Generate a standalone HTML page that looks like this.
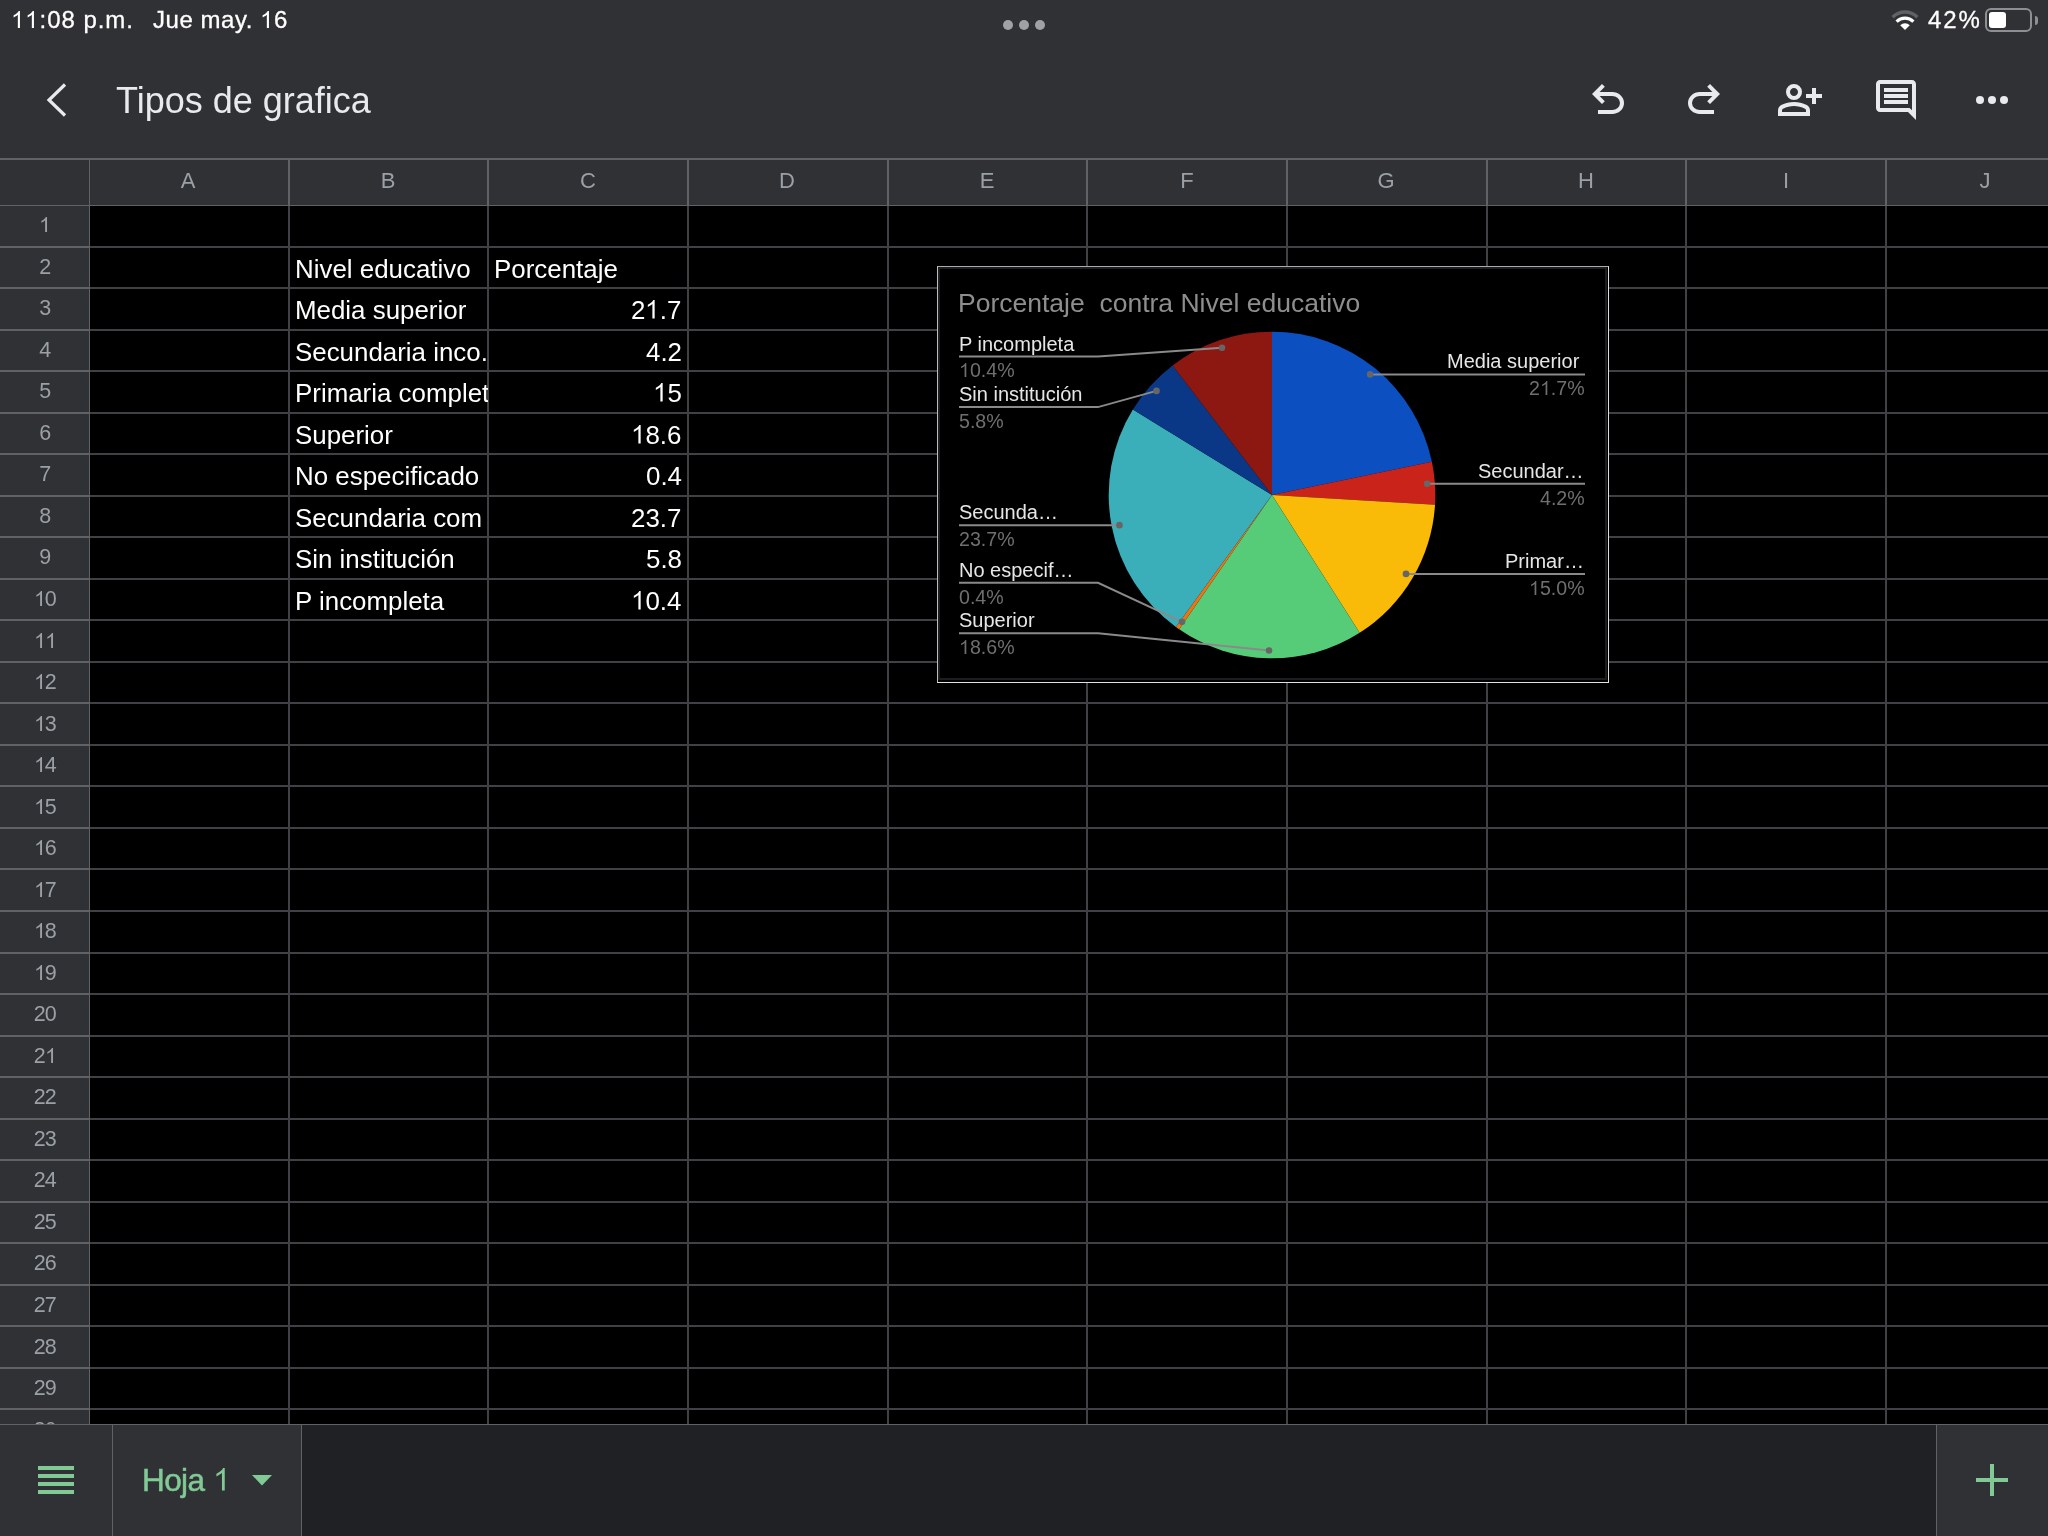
<!DOCTYPE html>
<html><head><meta charset="utf-8"><style>
html,body{margin:0;padding:0;width:2048px;height:1536px;overflow:hidden;background:#000;}
body{position:relative;font-family:"Liberation Sans",sans-serif;}
.t{position:absolute;line-height:1;white-space:pre;will-change:transform;}
.a{position:absolute;}
</style></head><body>
<div class="a" style="left:0;top:0;width:2048px;height:158px;background:#303134"></div>
<div class="t" style="left:10.8px;top:8.28px;font-size:24px;color:#ffffff;letter-spacing:0.95px;-webkit-text-stroke:0.3px #fff;"><svg viewBox="0 -716 556 716" style="width:0.556em;height:0.716em;vertical-align:baseline;margin-right:0.95px;"><path d="M373 0H285V-560L240 -522 175 -485 109 -449V-534L190 -578 255 -630 300 -680 320 -716H373Z" fill="currentColor"/></svg><svg viewBox="0 -716 556 716" style="width:0.556em;height:0.716em;vertical-align:baseline;margin-right:0.95px;"><path d="M373 0H285V-560L240 -522 175 -485 109 -449V-534L190 -578 255 -630 300 -680 320 -716H373Z" fill="currentColor"/></svg>:08 p.m.</div>
<div class="t" style="left:152.5px;top:8.28px;font-size:24px;color:#ffffff;letter-spacing:0.55px;-webkit-text-stroke:0.3px #fff;">Jue may. <svg viewBox="0 -716 556 716" style="width:0.556em;height:0.716em;vertical-align:baseline;margin-right:0.55px;"><path d="M373 0H285V-560L240 -522 175 -485 109 -449V-534L190 -578 255 -630 300 -680 320 -716H373Z" fill="currentColor"/></svg>6</div>
<div class="t" style="left:1928px;top:8.28px;font-size:24px;color:#ffffff;letter-spacing:1.9px;-webkit-text-stroke:0.3px #fff;">42%</div>
<div class="a" style="left:1003px;top:20px;width:10px;height:10px;border-radius:5px;background:#a0a1a5"></div>
<div class="a" style="left:1019px;top:20px;width:10px;height:10px;border-radius:5px;background:#a0a1a5"></div>
<div class="a" style="left:1035px;top:20px;width:10px;height:10px;border-radius:5px;background:#a0a1a5"></div>
<svg class="a" style="left:1889px;top:8px" width="32" height="24" viewBox="0 0 32 24">
<path d="M16 22 L11.2 17.2 A7 7 0 0 1 20.8 17.2 Z" fill="#fff"/>
<path d="M7.6 13.6 A12 12 0 0 1 24.4 13.6" stroke="#fff" stroke-width="3.2" fill="none"/>
<path d="M3.6 9.2 A17.5 17.5 0 0 1 28.4 9.2" stroke="#606164" stroke-width="3.4" fill="none"/>
</svg>
<div class="a" style="left:1985.2px;top:8.3px;width:43.3px;height:19.4px;border:2px solid #8e8f92;border-radius:6px;"></div>
<div class="a" style="left:1988.9px;top:11.9px;width:17px;height:16.1px;background:#fff;border-radius:3px;"></div>
<div class="a" style="left:2034.8px;top:16px;width:3.2px;height:8.8px;background:#8e8f92;border-radius:0 4px 4px 0;"></div>
<svg class="a" style="left:40px;top:80px" width="32" height="40" viewBox="0 0 32 40"><path d="M25 4.5 L9 20 L25 35.5" stroke="#e8eaed" stroke-width="3.2" fill="none" stroke-linecap="butt"/></svg>
<div class="t" style="left:116px;top:82.53px;font-size:36px;color:#e8eaed;">Tipos de grafica</div>
<svg class="a" style="left:1584px;top:76px" width="48" height="48" viewBox="0 -960 960 960"><path d="M280-200v-80h284q63 0 109.5-40T720-420q0-60-46.5-100T564-560H312l104 104-56 56-200-200 200-200 56 56-104 104h252q97 0 166.5 63T800-420q0 94-69.5 157T564-200H280Z" fill="#e8eaed"/></svg>
<svg class="a" style="left:1680px;top:76px" width="48" height="48" viewBox="0 -960 960 960"><path d="M396-200q-97 0-166.5-63T160-420q0-94 69.5-157T396-640h252L544-744l56-56 200 200-200 200-56-56 104-104H396q-63 0-109.5 40T240-420q0 60 46.5 100T396-280h284v80H396Z" fill="#e8eaed"/></svg>
<svg class="a" style="left:1776px;top:76px" width="48" height="48" viewBox="0 -960 960 960"><path d="M720-400v-120H600v-80h120v-120h80v120h120v80H800v120h-80Zm-360-80q-66 0-113-47t-47-113q0-66 47-113t113-47q66 0 113 47t47 113q0 66-47 113t-113 47ZM40-160v-112q0-34 17.5-62.5T104-378q62-31 126-46.5T360-440q66 0 130 15.5T616-378q29 15 46.5 43.5T680-272v112H40Zm80-80h480v-32q0-11-5.5-20T580-306q-54-27-109-40.5T360-360q-56 0-111 13.5T140-306q-9 5-14.5 14t-5.5 20v32Zm240-320q33 0 56.5-23.5T440-640q0-33-23.5-56.5T360-720q-33 0-56.5 23.5T280-640q0 33 23.5 56.5T360-560Z" fill="#e8eaed"/></svg>
<svg class="a" style="left:1872px;top:76px" width="48" height="48" viewBox="0 0 24 24"><path d="M21.99 4c0-1.1-.89-2-1.99-2H4c-1.1 0-2 .9-2 2v12c0 1.1.9 2 2 2h14l4 4-.01-18zM20 4v13.17L18.83 16H4V4h16zM6 12h12v2H6zm0-3h12v2H6zm0-3h12v2H6z" fill="#e8eaed"/></svg>
<div class="a" style="left:1976px;top:96px;width:8px;height:8px;border-radius:4px;background:#e8eaed"></div>
<div class="a" style="left:1988px;top:96px;width:8px;height:8px;border-radius:4px;background:#e8eaed"></div>
<div class="a" style="left:2000px;top:96px;width:8px;height:8px;border-radius:4px;background:#e8eaed"></div>
<div class="a" style="left:0;top:158px;width:2048px;height:2px;background:#5f6368"></div>
<div class="a" style="left:0;top:160px;width:2048px;height:45px;background:#303134"></div>
<div class="a" style="left:0;top:205px;width:89px;height:1219px;background:#303134"></div>
<div class="t" style="left:-311.665px;width:1000px;text-align:center;top:169.78px;font-size:22px;color:#9aa0a6;">A</div>
<div class="t" style="left:-111.99500000000006px;width:1000px;text-align:center;top:169.78px;font-size:22px;color:#9aa0a6;">B</div>
<div class="t" style="left:87.67499999999995px;width:1000px;text-align:center;top:169.78px;font-size:22px;color:#9aa0a6;">C</div>
<div class="t" style="left:287.345px;width:1000px;text-align:center;top:169.78px;font-size:22px;color:#9aa0a6;">D</div>
<div class="t" style="left:487.015px;width:1000px;text-align:center;top:169.78px;font-size:22px;color:#9aa0a6;">E</div>
<div class="t" style="left:686.685px;width:1000px;text-align:center;top:169.78px;font-size:22px;color:#9aa0a6;">F</div>
<div class="t" style="left:886.355px;width:1000px;text-align:center;top:169.78px;font-size:22px;color:#9aa0a6;">G</div>
<div class="t" style="left:1086.0249999999999px;width:1000px;text-align:center;top:169.78px;font-size:22px;color:#9aa0a6;">H</div>
<div class="t" style="left:1285.695px;width:1000px;text-align:center;top:169.78px;font-size:22px;color:#9aa0a6;">I</div>
<div class="t" style="left:1485.365px;width:1000px;text-align:center;top:169.78px;font-size:22px;color:#9aa0a6;">J</div>
<div class="t" style="left:-456px;width:1000px;text-align:center;top:215.20px;font-size:21.5px;color:#9aa0a6;letter-spacing:-0.8px;padding-left:0.8px;"><svg viewBox="0 -716 556 716" style="width:0.556em;height:0.716em;vertical-align:baseline;margin-right:-0.8px;"><path d="M373 0H285V-560L240 -522 175 -485 109 -449V-534L190 -578 255 -630 300 -680 320 -716H373Z" fill="currentColor"/></svg></div>
<div class="t" style="left:-456px;width:1000px;text-align:center;top:256.73px;font-size:21.5px;color:#9aa0a6;letter-spacing:-0.8px;padding-left:0.8px;">2</div>
<div class="t" style="left:-456px;width:1000px;text-align:center;top:298.26px;font-size:21.5px;color:#9aa0a6;letter-spacing:-0.8px;padding-left:0.8px;">3</div>
<div class="t" style="left:-456px;width:1000px;text-align:center;top:339.79px;font-size:21.5px;color:#9aa0a6;letter-spacing:-0.8px;padding-left:0.8px;">4</div>
<div class="t" style="left:-456px;width:1000px;text-align:center;top:381.32px;font-size:21.5px;color:#9aa0a6;letter-spacing:-0.8px;padding-left:0.8px;">5</div>
<div class="t" style="left:-456px;width:1000px;text-align:center;top:422.85px;font-size:21.5px;color:#9aa0a6;letter-spacing:-0.8px;padding-left:0.8px;">6</div>
<div class="t" style="left:-456px;width:1000px;text-align:center;top:464.38px;font-size:21.5px;color:#9aa0a6;letter-spacing:-0.8px;padding-left:0.8px;">7</div>
<div class="t" style="left:-456px;width:1000px;text-align:center;top:505.91px;font-size:21.5px;color:#9aa0a6;letter-spacing:-0.8px;padding-left:0.8px;">8</div>
<div class="t" style="left:-456px;width:1000px;text-align:center;top:547.44px;font-size:21.5px;color:#9aa0a6;letter-spacing:-0.8px;padding-left:0.8px;">9</div>
<div class="t" style="left:-456px;width:1000px;text-align:center;top:588.97px;font-size:21.5px;color:#9aa0a6;letter-spacing:-0.8px;padding-left:0.8px;"><svg viewBox="0 -716 556 716" style="width:0.556em;height:0.716em;vertical-align:baseline;margin-right:-0.8px;"><path d="M373 0H285V-560L240 -522 175 -485 109 -449V-534L190 -578 255 -630 300 -680 320 -716H373Z" fill="currentColor"/></svg>0</div>
<div class="t" style="left:-456px;width:1000px;text-align:center;top:630.50px;font-size:21.5px;color:#9aa0a6;letter-spacing:-0.8px;padding-left:0.8px;"><svg viewBox="0 -716 556 716" style="width:0.556em;height:0.716em;vertical-align:baseline;margin-right:-0.8px;"><path d="M373 0H285V-560L240 -522 175 -485 109 -449V-534L190 -578 255 -630 300 -680 320 -716H373Z" fill="currentColor"/></svg><svg viewBox="0 -716 556 716" style="width:0.556em;height:0.716em;vertical-align:baseline;margin-right:-0.8px;"><path d="M373 0H285V-560L240 -522 175 -485 109 -449V-534L190 -578 255 -630 300 -680 320 -716H373Z" fill="currentColor"/></svg></div>
<div class="t" style="left:-456px;width:1000px;text-align:center;top:672.03px;font-size:21.5px;color:#9aa0a6;letter-spacing:-0.8px;padding-left:0.8px;"><svg viewBox="0 -716 556 716" style="width:0.556em;height:0.716em;vertical-align:baseline;margin-right:-0.8px;"><path d="M373 0H285V-560L240 -522 175 -485 109 -449V-534L190 -578 255 -630 300 -680 320 -716H373Z" fill="currentColor"/></svg>2</div>
<div class="t" style="left:-456px;width:1000px;text-align:center;top:713.56px;font-size:21.5px;color:#9aa0a6;letter-spacing:-0.8px;padding-left:0.8px;"><svg viewBox="0 -716 556 716" style="width:0.556em;height:0.716em;vertical-align:baseline;margin-right:-0.8px;"><path d="M373 0H285V-560L240 -522 175 -485 109 -449V-534L190 -578 255 -630 300 -680 320 -716H373Z" fill="currentColor"/></svg>3</div>
<div class="t" style="left:-456px;width:1000px;text-align:center;top:755.09px;font-size:21.5px;color:#9aa0a6;letter-spacing:-0.8px;padding-left:0.8px;"><svg viewBox="0 -716 556 716" style="width:0.556em;height:0.716em;vertical-align:baseline;margin-right:-0.8px;"><path d="M373 0H285V-560L240 -522 175 -485 109 -449V-534L190 -578 255 -630 300 -680 320 -716H373Z" fill="currentColor"/></svg>4</div>
<div class="t" style="left:-456px;width:1000px;text-align:center;top:796.62px;font-size:21.5px;color:#9aa0a6;letter-spacing:-0.8px;padding-left:0.8px;"><svg viewBox="0 -716 556 716" style="width:0.556em;height:0.716em;vertical-align:baseline;margin-right:-0.8px;"><path d="M373 0H285V-560L240 -522 175 -485 109 -449V-534L190 -578 255 -630 300 -680 320 -716H373Z" fill="currentColor"/></svg>5</div>
<div class="t" style="left:-456px;width:1000px;text-align:center;top:838.15px;font-size:21.5px;color:#9aa0a6;letter-spacing:-0.8px;padding-left:0.8px;"><svg viewBox="0 -716 556 716" style="width:0.556em;height:0.716em;vertical-align:baseline;margin-right:-0.8px;"><path d="M373 0H285V-560L240 -522 175 -485 109 -449V-534L190 -578 255 -630 300 -680 320 -716H373Z" fill="currentColor"/></svg>6</div>
<div class="t" style="left:-456px;width:1000px;text-align:center;top:879.68px;font-size:21.5px;color:#9aa0a6;letter-spacing:-0.8px;padding-left:0.8px;"><svg viewBox="0 -716 556 716" style="width:0.556em;height:0.716em;vertical-align:baseline;margin-right:-0.8px;"><path d="M373 0H285V-560L240 -522 175 -485 109 -449V-534L190 -578 255 -630 300 -680 320 -716H373Z" fill="currentColor"/></svg>7</div>
<div class="t" style="left:-456px;width:1000px;text-align:center;top:921.21px;font-size:21.5px;color:#9aa0a6;letter-spacing:-0.8px;padding-left:0.8px;"><svg viewBox="0 -716 556 716" style="width:0.556em;height:0.716em;vertical-align:baseline;margin-right:-0.8px;"><path d="M373 0H285V-560L240 -522 175 -485 109 -449V-534L190 -578 255 -630 300 -680 320 -716H373Z" fill="currentColor"/></svg>8</div>
<div class="t" style="left:-456px;width:1000px;text-align:center;top:962.74px;font-size:21.5px;color:#9aa0a6;letter-spacing:-0.8px;padding-left:0.8px;"><svg viewBox="0 -716 556 716" style="width:0.556em;height:0.716em;vertical-align:baseline;margin-right:-0.8px;"><path d="M373 0H285V-560L240 -522 175 -485 109 -449V-534L190 -578 255 -630 300 -680 320 -716H373Z" fill="currentColor"/></svg>9</div>
<div class="t" style="left:-456px;width:1000px;text-align:center;top:1004.27px;font-size:21.5px;color:#9aa0a6;letter-spacing:-0.8px;padding-left:0.8px;">20</div>
<div class="t" style="left:-456px;width:1000px;text-align:center;top:1045.80px;font-size:21.5px;color:#9aa0a6;letter-spacing:-0.8px;padding-left:0.8px;">2<svg viewBox="0 -716 556 716" style="width:0.556em;height:0.716em;vertical-align:baseline;margin-right:-0.8px;"><path d="M373 0H285V-560L240 -522 175 -485 109 -449V-534L190 -578 255 -630 300 -680 320 -716H373Z" fill="currentColor"/></svg></div>
<div class="t" style="left:-456px;width:1000px;text-align:center;top:1087.33px;font-size:21.5px;color:#9aa0a6;letter-spacing:-0.8px;padding-left:0.8px;">22</div>
<div class="t" style="left:-456px;width:1000px;text-align:center;top:1128.86px;font-size:21.5px;color:#9aa0a6;letter-spacing:-0.8px;padding-left:0.8px;">23</div>
<div class="t" style="left:-456px;width:1000px;text-align:center;top:1170.39px;font-size:21.5px;color:#9aa0a6;letter-spacing:-0.8px;padding-left:0.8px;">24</div>
<div class="t" style="left:-456px;width:1000px;text-align:center;top:1211.92px;font-size:21.5px;color:#9aa0a6;letter-spacing:-0.8px;padding-left:0.8px;">25</div>
<div class="t" style="left:-456px;width:1000px;text-align:center;top:1253.45px;font-size:21.5px;color:#9aa0a6;letter-spacing:-0.8px;padding-left:0.8px;">26</div>
<div class="t" style="left:-456px;width:1000px;text-align:center;top:1294.98px;font-size:21.5px;color:#9aa0a6;letter-spacing:-0.8px;padding-left:0.8px;">27</div>
<div class="t" style="left:-456px;width:1000px;text-align:center;top:1336.51px;font-size:21.5px;color:#9aa0a6;letter-spacing:-0.8px;padding-left:0.8px;">28</div>
<div class="t" style="left:-456px;width:1000px;text-align:center;top:1378.04px;font-size:21.5px;color:#9aa0a6;letter-spacing:-0.8px;padding-left:0.8px;">29</div>
<div class="t" style="left:-456px;width:1000px;text-align:center;top:1419.57px;font-size:21.5px;color:#9aa0a6;letter-spacing:-0.8px;padding-left:0.8px;">30</div>
<div class="a" style="left:0;top:205px;width:2048px;height:1px;background:#5f6368"></div>
<div class="a" style="left:0;top:246px;width:89px;height:2px;background:#5f6368"></div>
<div class="a" style="left:90px;top:246px;width:1958px;height:2px;background:#404145"></div>
<div class="a" style="left:0;top:287px;width:89px;height:2px;background:#5f6368"></div>
<div class="a" style="left:90px;top:287px;width:1958px;height:2px;background:#404145"></div>
<div class="a" style="left:0;top:329px;width:89px;height:2px;background:#5f6368"></div>
<div class="a" style="left:90px;top:329px;width:1958px;height:2px;background:#404145"></div>
<div class="a" style="left:0;top:370px;width:89px;height:2px;background:#5f6368"></div>
<div class="a" style="left:90px;top:370px;width:1958px;height:2px;background:#404145"></div>
<div class="a" style="left:0;top:412px;width:89px;height:2px;background:#5f6368"></div>
<div class="a" style="left:90px;top:412px;width:1958px;height:2px;background:#404145"></div>
<div class="a" style="left:0;top:453px;width:89px;height:2px;background:#5f6368"></div>
<div class="a" style="left:90px;top:453px;width:1958px;height:2px;background:#404145"></div>
<div class="a" style="left:0;top:495px;width:89px;height:2px;background:#5f6368"></div>
<div class="a" style="left:90px;top:495px;width:1958px;height:2px;background:#404145"></div>
<div class="a" style="left:0;top:536px;width:89px;height:2px;background:#5f6368"></div>
<div class="a" style="left:90px;top:536px;width:1958px;height:2px;background:#404145"></div>
<div class="a" style="left:0;top:578px;width:89px;height:2px;background:#5f6368"></div>
<div class="a" style="left:90px;top:578px;width:1958px;height:2px;background:#404145"></div>
<div class="a" style="left:0;top:619px;width:89px;height:2px;background:#5f6368"></div>
<div class="a" style="left:90px;top:619px;width:1958px;height:2px;background:#404145"></div>
<div class="a" style="left:0;top:661px;width:89px;height:2px;background:#5f6368"></div>
<div class="a" style="left:90px;top:661px;width:1958px;height:2px;background:#404145"></div>
<div class="a" style="left:0;top:702px;width:89px;height:2px;background:#5f6368"></div>
<div class="a" style="left:90px;top:702px;width:1958px;height:2px;background:#404145"></div>
<div class="a" style="left:0;top:744px;width:89px;height:2px;background:#5f6368"></div>
<div class="a" style="left:90px;top:744px;width:1958px;height:2px;background:#404145"></div>
<div class="a" style="left:0;top:785px;width:89px;height:2px;background:#5f6368"></div>
<div class="a" style="left:90px;top:785px;width:1958px;height:2px;background:#404145"></div>
<div class="a" style="left:0;top:827px;width:89px;height:2px;background:#5f6368"></div>
<div class="a" style="left:90px;top:827px;width:1958px;height:2px;background:#404145"></div>
<div class="a" style="left:0;top:868px;width:89px;height:2px;background:#5f6368"></div>
<div class="a" style="left:90px;top:868px;width:1958px;height:2px;background:#404145"></div>
<div class="a" style="left:0;top:910px;width:89px;height:2px;background:#5f6368"></div>
<div class="a" style="left:90px;top:910px;width:1958px;height:2px;background:#404145"></div>
<div class="a" style="left:0;top:952px;width:89px;height:2px;background:#5f6368"></div>
<div class="a" style="left:90px;top:952px;width:1958px;height:2px;background:#404145"></div>
<div class="a" style="left:0;top:993px;width:89px;height:2px;background:#5f6368"></div>
<div class="a" style="left:90px;top:993px;width:1958px;height:2px;background:#404145"></div>
<div class="a" style="left:0;top:1035px;width:89px;height:2px;background:#5f6368"></div>
<div class="a" style="left:90px;top:1035px;width:1958px;height:2px;background:#404145"></div>
<div class="a" style="left:0;top:1076px;width:89px;height:2px;background:#5f6368"></div>
<div class="a" style="left:90px;top:1076px;width:1958px;height:2px;background:#404145"></div>
<div class="a" style="left:0;top:1118px;width:89px;height:2px;background:#5f6368"></div>
<div class="a" style="left:90px;top:1118px;width:1958px;height:2px;background:#404145"></div>
<div class="a" style="left:0;top:1159px;width:89px;height:2px;background:#5f6368"></div>
<div class="a" style="left:90px;top:1159px;width:1958px;height:2px;background:#404145"></div>
<div class="a" style="left:0;top:1201px;width:89px;height:2px;background:#5f6368"></div>
<div class="a" style="left:90px;top:1201px;width:1958px;height:2px;background:#404145"></div>
<div class="a" style="left:0;top:1242px;width:89px;height:2px;background:#5f6368"></div>
<div class="a" style="left:90px;top:1242px;width:1958px;height:2px;background:#404145"></div>
<div class="a" style="left:0;top:1284px;width:89px;height:2px;background:#5f6368"></div>
<div class="a" style="left:90px;top:1284px;width:1958px;height:2px;background:#404145"></div>
<div class="a" style="left:0;top:1325px;width:89px;height:2px;background:#5f6368"></div>
<div class="a" style="left:90px;top:1325px;width:1958px;height:2px;background:#404145"></div>
<div class="a" style="left:0;top:1367px;width:89px;height:2px;background:#5f6368"></div>
<div class="a" style="left:90px;top:1367px;width:1958px;height:2px;background:#404145"></div>
<div class="a" style="left:0;top:1408px;width:89px;height:2px;background:#5f6368"></div>
<div class="a" style="left:90px;top:1408px;width:1958px;height:2px;background:#404145"></div>
<div class="a" style="left:89px;top:160px;width:1px;height:1264px;background:#5f6368"></div>
<div class="a" style="left:288px;top:160px;width:2px;height:45px;background:#5f6368"></div>
<div class="a" style="left:288px;top:206px;width:2px;height:1218px;background:#404145"></div>
<div class="a" style="left:487px;top:160px;width:2px;height:45px;background:#5f6368"></div>
<div class="a" style="left:487px;top:206px;width:2px;height:1218px;background:#404145"></div>
<div class="a" style="left:687px;top:160px;width:2px;height:45px;background:#5f6368"></div>
<div class="a" style="left:687px;top:206px;width:2px;height:1218px;background:#404145"></div>
<div class="a" style="left:887px;top:160px;width:2px;height:45px;background:#5f6368"></div>
<div class="a" style="left:887px;top:206px;width:2px;height:1218px;background:#404145"></div>
<div class="a" style="left:1086px;top:160px;width:2px;height:45px;background:#5f6368"></div>
<div class="a" style="left:1086px;top:206px;width:2px;height:1218px;background:#404145"></div>
<div class="a" style="left:1286px;top:160px;width:2px;height:45px;background:#5f6368"></div>
<div class="a" style="left:1286px;top:206px;width:2px;height:1218px;background:#404145"></div>
<div class="a" style="left:1486px;top:160px;width:2px;height:45px;background:#5f6368"></div>
<div class="a" style="left:1486px;top:206px;width:2px;height:1218px;background:#404145"></div>
<div class="a" style="left:1685px;top:160px;width:2px;height:45px;background:#5f6368"></div>
<div class="a" style="left:1685px;top:206px;width:2px;height:1218px;background:#404145"></div>
<div class="a" style="left:1885px;top:160px;width:2px;height:45px;background:#5f6368"></div>
<div class="a" style="left:1885px;top:206px;width:2px;height:1218px;background:#404145"></div>
<div class="a" style="left:289.5px;top:247.80px;width:198.5px;height:40px;overflow:hidden"><div class="t" style="left:5px;top:9.08px;font-size:25.9px;color:#ffffff;">Nivel educativo</div>
</div>
<div class="t" style="left:493.5px;top:256.88px;font-size:25.9px;color:#ffffff;">Porcentaje</div>
<div class="a" style="left:289.5px;top:289.30px;width:198.5px;height:40px;overflow:hidden"><div class="t" style="left:5px;top:9.08px;font-size:25.9px;color:#ffffff;">Media superior</div>
</div>
<div class="t" style="right:1366.5px;text-align:right;top:298.38px;font-size:25.9px;color:#ffffff;">2<svg viewBox="0 -716 556 716" style="width:0.556em;height:0.716em;vertical-align:baseline;"><path d="M373 0H285V-560L240 -522 175 -485 109 -449V-534L190 -578 255 -630 300 -680 320 -716H373Z" fill="currentColor"/></svg>.7</div>
<div class="a" style="left:289.5px;top:330.80px;width:198.5px;height:40px;overflow:hidden"><div class="t" style="left:5px;top:9.08px;font-size:25.9px;color:#ffffff;">Secundaria inco.</div>
</div>
<div class="t" style="right:1366.5px;text-align:right;top:339.88px;font-size:25.9px;color:#ffffff;">4.2</div>
<div class="a" style="left:289.5px;top:372.30px;width:198.5px;height:40px;overflow:hidden"><div class="t" style="left:5px;top:9.08px;font-size:25.9px;color:#ffffff;">Primaria complet</div>
</div>
<div class="t" style="right:1366.5px;text-align:right;top:381.38px;font-size:25.9px;color:#ffffff;"><svg viewBox="0 -716 556 716" style="width:0.556em;height:0.716em;vertical-align:baseline;"><path d="M373 0H285V-560L240 -522 175 -485 109 -449V-534L190 -578 255 -630 300 -680 320 -716H373Z" fill="currentColor"/></svg>5</div>
<div class="a" style="left:289.5px;top:413.80px;width:198.5px;height:40px;overflow:hidden"><div class="t" style="left:5px;top:9.08px;font-size:25.9px;color:#ffffff;">Superior</div>
</div>
<div class="t" style="right:1366.5px;text-align:right;top:422.88px;font-size:25.9px;color:#ffffff;"><svg viewBox="0 -716 556 716" style="width:0.556em;height:0.716em;vertical-align:baseline;"><path d="M373 0H285V-560L240 -522 175 -485 109 -449V-534L190 -578 255 -630 300 -680 320 -716H373Z" fill="currentColor"/></svg>8.6</div>
<div class="a" style="left:289.5px;top:455.30px;width:198.5px;height:40px;overflow:hidden"><div class="t" style="left:5px;top:9.08px;font-size:25.9px;color:#ffffff;">No especificado</div>
</div>
<div class="t" style="right:1366.5px;text-align:right;top:464.38px;font-size:25.9px;color:#ffffff;">0.4</div>
<div class="a" style="left:289.5px;top:496.80px;width:198.5px;height:40px;overflow:hidden"><div class="t" style="left:5px;top:9.08px;font-size:25.9px;color:#ffffff;">Secundaria com</div>
</div>
<div class="t" style="right:1366.5px;text-align:right;top:505.88px;font-size:25.9px;color:#ffffff;">23.7</div>
<div class="a" style="left:289.5px;top:538.30px;width:198.5px;height:40px;overflow:hidden"><div class="t" style="left:5px;top:9.08px;font-size:25.9px;color:#ffffff;">Sin institución</div>
</div>
<div class="t" style="right:1366.5px;text-align:right;top:547.38px;font-size:25.9px;color:#ffffff;">5.8</div>
<div class="a" style="left:289.5px;top:579.80px;width:198.5px;height:40px;overflow:hidden"><div class="t" style="left:5px;top:9.08px;font-size:25.9px;color:#ffffff;">P incompleta</div>
</div>
<div class="t" style="right:1366.5px;text-align:right;top:588.88px;font-size:25.9px;color:#ffffff;"><svg viewBox="0 -716 556 716" style="width:0.556em;height:0.716em;vertical-align:baseline;"><path d="M373 0H285V-560L240 -522 175 -485 109 -449V-534L190 -578 255 -630 300 -680 320 -716H373Z" fill="currentColor"/></svg>0.4</div>
<div class="a" style="left:937px;top:266px;width:670px;height:415px;border:1px solid;border-color:#ababab #dedede #e2e2e2 #bdbdbd;background:#000"></div>
<div class="a" style="left:938px;top:267px;width:665px;height:409px;border:2px solid #1c1d21;"></div>
<div class="t" style="left:957.6px;top:289.77px;font-size:26.5px;color:#8e8e8e;">Porcentaje  contra Nivel educativo</div>
<div class="t" style="right:468.5px;text-align:right;top:351.26px;font-size:20px;color:#e6e6e6;">Media superior</div>
<div class="t" style="right:463px;text-align:right;top:379.30px;font-size:19.6px;color:#6f6f6f;">2<svg viewBox="0 -716 556 716" style="width:0.556em;height:0.716em;vertical-align:baseline;"><path d="M373 0H285V-560L240 -522 175 -485 109 -449V-534L190 -578 255 -630 300 -680 320 -716H373Z" fill="currentColor"/></svg>.7%</div>
<div class="t" style="right:464.5px;text-align:right;top:460.62px;font-size:20px;color:#e6e6e6;">Secundar…</div>
<div class="t" style="right:463px;text-align:right;top:488.66px;font-size:19.6px;color:#6f6f6f;">4.2%</div>
<div class="t" style="right:464.5px;text-align:right;top:550.75px;font-size:20px;color:#e6e6e6;">Primar…</div>
<div class="t" style="right:463px;text-align:right;top:578.79px;font-size:19.6px;color:#6f6f6f;"><svg viewBox="0 -716 556 716" style="width:0.556em;height:0.716em;vertical-align:baseline;"><path d="M373 0H285V-560L240 -522 175 -485 109 -449V-534L190 -578 255 -630 300 -680 320 -716H373Z" fill="currentColor"/></svg>5.0%</div>
<div class="t" style="left:958.7px;top:333.57px;font-size:20px;color:#e6e6e6;">P incompleta</div>
<div class="t" style="left:958.5px;top:361.41px;font-size:19.6px;color:#6f6f6f;"><svg viewBox="0 -716 556 716" style="width:0.556em;height:0.716em;vertical-align:baseline;"><path d="M373 0H285V-560L240 -522 175 -485 109 -449V-534L190 -578 255 -630 300 -680 320 -716H373Z" fill="currentColor"/></svg>0.4%</div>
<div class="t" style="left:958.7px;top:384.17px;font-size:20px;color:#e6e6e6;">Sin institución</div>
<div class="t" style="left:958.5px;top:412.01px;font-size:19.6px;color:#6f6f6f;">5.8%</div>
<div class="t" style="left:958.7px;top:502.27px;font-size:20px;color:#e6e6e6;">Secunda…</div>
<div class="t" style="left:958.5px;top:530.11px;font-size:19.6px;color:#6f6f6f;">23.7%</div>
<div class="t" style="left:958.7px;top:559.87px;font-size:20px;color:#e6e6e6;">No especif…</div>
<div class="t" style="left:958.5px;top:587.71px;font-size:19.6px;color:#6f6f6f;">0.4%</div>
<div class="t" style="left:958.7px;top:610.27px;font-size:20px;color:#e6e6e6;">Superior</div>
<div class="t" style="left:958.5px;top:638.11px;font-size:19.6px;color:#6f6f6f;"><svg viewBox="0 -716 556 716" style="width:0.556em;height:0.716em;vertical-align:baseline;"><path d="M373 0H285V-560L240 -522 175 -485 109 -449V-534L190 -578 255 -630 300 -680 320 -716H373Z" fill="currentColor"/></svg>8.6%</div>
<svg class="a" style="left:0;top:0" width="2048" height="1536" viewBox="0 0 2048 1536"><path d="M1272 495 L1272.00 331.70 A163.3 163.3 0 0 1 1431.89 461.82 Z" fill="#0b4fc1"/><path d="M1272 495 L1431.89 461.82 A163.3 163.3 0 0 1 1435.01 504.76 Z" fill="#c9231a"/><path d="M1272 495 L1435.01 504.76 A163.3 163.3 0 0 1 1359.66 632.78 Z" fill="#f9bb08"/><path d="M1272 495 L1359.66 632.78 A163.3 163.3 0 0 1 1179.20 629.37 Z" fill="#57cc78"/><path d="M1272 495 L1179.20 629.37 A163.3 163.3 0 0 1 1175.85 626.99 Z" fill="#f2720f"/><path d="M1272 495 L1175.85 626.99 A163.3 163.3 0 0 1 1132.86 409.52 Z" fill="#3aafb9"/><path d="M1272 495 L1132.86 409.52 A163.3 163.3 0 0 1 1172.56 365.47 Z" fill="#0a3886"/><path d="M1272 495 L1172.56 365.47 A163.3 163.3 0 0 1 1272.00 331.70 Z" fill="#8d1811"/><path d="M1370.15 374.39 H1585" stroke="#8a8a8a" stroke-width="2" fill="none"/><circle cx="1370.15" cy="374.39" r="3.3" fill="#666"/><path d="M1427.09 483.75 H1585" stroke="#8a8a8a" stroke-width="2" fill="none"/><circle cx="1427.09" cy="483.75" r="3.3" fill="#666"/><path d="M1406.01 573.88 H1585" stroke="#8a8a8a" stroke-width="2" fill="none"/><circle cx="1406.01" cy="573.88" r="3.3" fill="#666"/><path d="M959 356.5 H1098 L1222.00 347.76" stroke="#8a8a8a" stroke-width="2" fill="none"/><circle cx="1222.00" cy="347.76" r="3.3" fill="#666"/><path d="M959 407.1 H1098 L1156.48 390.90" stroke="#8a8a8a" stroke-width="2" fill="none"/><circle cx="1156.48" cy="390.90" r="3.3" fill="#666"/><path d="M959 525.2 H1119.45" stroke="#8a8a8a" stroke-width="2" fill="none"/><circle cx="1119.45" cy="525.16" r="3.3" fill="#666"/><path d="M959 582.8 H1098 L1182.03 621.83" stroke="#8a8a8a" stroke-width="2" fill="none"/><circle cx="1182.03" cy="621.83" r="3.3" fill="#666"/><path d="M959 633.2 H1098 L1269.06 650.47" stroke="#8a8a8a" stroke-width="2" fill="none"/><circle cx="1269.06" cy="650.47" r="3.3" fill="#666"/></svg>
<div class="a" style="left:0;top:1424px;width:2048px;height:112px;background:#202124"></div>
<div class="a" style="left:0;top:1425px;width:301px;height:111px;background:#303134"></div>
<div class="a" style="left:1937px;top:1425px;width:111px;height:111px;background:#303134"></div>
<div class="a" style="left:0;top:1424px;width:2048px;height:1px;background:#5f6368"></div>
<div class="a" style="left:112px;top:1424px;width:1px;height:112px;background:#5f6368"></div>
<div class="a" style="left:301px;top:1424px;width:1px;height:112px;background:#5f6368"></div>
<div class="a" style="left:1936px;top:1424px;width:1px;height:112px;background:#5f6368"></div>
<div class="a" style="left:38px;top:1466.25px;width:36px;height:3.75px;background:#81c995"></div>
<div class="a" style="left:38px;top:1474.25px;width:36px;height:3.75px;background:#81c995"></div>
<div class="a" style="left:38px;top:1482.25px;width:36px;height:3.75px;background:#81c995"></div>
<div class="a" style="left:38px;top:1490.25px;width:36px;height:3.75px;background:#81c995"></div>
<div class="t" style="left:141.5px;top:1464.54px;font-size:31.5px;color:#81c995;letter-spacing:-0.6px;-webkit-text-stroke:0.5px #81c995;">Hoja <svg viewBox="0 -716 556 716" style="width:0.556em;height:0.716em;vertical-align:baseline;margin-right:-0.6px;"><path d="M373 0H285V-560L240 -522 175 -485 109 -449V-534L190 -578 255 -630 300 -680 320 -716H373Z" fill="currentColor"/></svg></div>
<svg class="a" style="left:252px;top:1475px" width="20" height="11" viewBox="0 0 20 11"><path d="M0 0 L20 0 L10 10.5 Z" fill="#81c995"/></svg>
<div class="a" style="left:1976px;top:1478px;width:32px;height:4px;background:#81c995"></div>
<div class="a" style="left:1990px;top:1464px;width:4px;height:32px;background:#81c995"></div>
</body></html>
